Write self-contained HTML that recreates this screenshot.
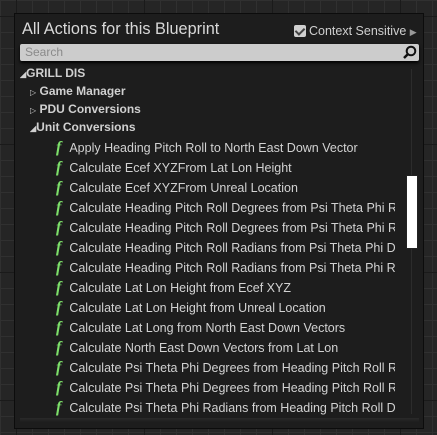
<!DOCTYPE html><html><head><style>
body{margin:0;width:437px;height:435px;overflow:hidden;background-color:#252525;
background-image:linear-gradient(#1a1a1a 1px,transparent 1px),linear-gradient(90deg,#1a1a1a 1px,transparent 1px),linear-gradient(#303030 1px,transparent 1px),linear-gradient(90deg,#303030 1px,transparent 1px);
background-size:128px 128px,128px 128px,16px 16px,16px 16px;background-position:16px 16px,16px 16px,0 0,0 0;
font-family:"Liberation Sans",sans-serif;position:relative}
.p{position:absolute;left:14px;top:13px;width:408px;height:414px;background:#1d1d1d;border:1px solid #0c0c0c}
.t{position:absolute;left:7px;top:6px;color:#d8d8d8;font-size:16.3px}
.cs{position:absolute;left:279px;top:10px;color:#cfcfcf;font-size:12.5px}
.cb{display:inline-block;width:12px;height:12px;background:#d0d0d0;border-radius:2px;vertical-align:-2px;margin-right:3px;position:relative}
.cb:after{content:"";position:absolute;left:3px;top:1px;width:4px;height:7px;border:solid #444;border-width:0 2px 2px 0;transform:rotate(45deg)}
.s{position:absolute;left:5px;top:30px;width:399px;height:17px;background:#cccccc;border-radius:2px;color:#8a8a8a;font-size:12px;line-height:17px;text-indent:5px;box-shadow:0 2px 3px #000}
.r{position:absolute;white-space:nowrap;color:#d2d2d2;font-size:12.5px;overflow:hidden}
.c{font-weight:bold;color:#d0d0d0;font-size:12px}
.f{color:#7ddf6a;font-family:"Liberation Serif",serif;font-style:italic;font-weight:bold;font-size:16px;margin-right:8px}
.tr{position:absolute;left:396px;top:55px;width:1px;height:345px;background:#2c2c2c}
.th{position:absolute;left:391px;top:161px;width:10px;height:72px;background:#fff;border:1px solid #222}
.bot{position:absolute;left:5px;top:404px;width:399px;height:4px;background:linear-gradient(#2a2a2a,#1d1d1d)}
</style></head><body><div class="p">
<div class="t">All Actions for this Blueprint</div>
<div class="cs"><span class="cb"></span>Context Sensitive <span style="color:#999;font-size:9px">&#9654;</span></div>
<div class="s">Search<svg style="position:absolute;right:2px;top:1px" width="15" height="15" viewBox="0 0 15 15"><circle cx="9" cy="6" r="4.3" fill="none" stroke="#111" stroke-width="2"/><line x1="6" y1="9" x2="2" y2="13" stroke="#111" stroke-width="2.5"/></svg></div>
<div class="tr"></div><div class="th"></div>
<div class="r c" style="left:5px;top:52px"><span style="font-size:8px">&#9698;</span>GRILL DIS</div>
<div class="r c" style="left:15px;top:70px"><span style="font-size:8px;font-weight:normal">&#9655;</span> Game Manager</div>
<div class="r c" style="left:15px;top:88px"><span style="font-size:8px;font-weight:normal">&#9655;</span> PDU Conversions</div>
<div class="r c" style="left:15px;top:106px"><span style="font-size:8px">&#9698;</span>Unit Conversions</div>
<div style="position:absolute;left:41px;top:125px;width:339px;height:279px;overflow:hidden">
<div class="r" style="top:0"><span class="f">f</span>Apply Heading Pitch Roll to North East Down Vector</div>
<div class="r" style="top:20px"><span class="f">f</span>Calculate Ecef XYZFrom Lat Lon Height</div>
<div class="r" style="top:40px"><span class="f">f</span>Calculate Ecef XYZFrom Unreal Location</div>
<div class="r" style="top:60px"><span class="f">f</span>Calculate Heading Pitch Roll Degrees from Psi Theta Phi Radians</div>
<div class="r" style="top:80px"><span class="f">f</span>Calculate Heading Pitch Roll Degrees from Psi Theta Phi Radians</div>
<div class="r" style="top:100px"><span class="f">f</span>Calculate Heading Pitch Roll Radians from Psi Theta Phi Degrees</div>
<div class="r" style="top:120px"><span class="f">f</span>Calculate Heading Pitch Roll Radians from Psi Theta Phi Radians</div>
<div class="r" style="top:140px"><span class="f">f</span>Calculate Lat Lon Height from Ecef XYZ</div>
<div class="r" style="top:160px"><span class="f">f</span>Calculate Lat Lon Height from Unreal Location</div>
<div class="r" style="top:180px"><span class="f">f</span>Calculate Lat Long from North East Down Vectors</div>
<div class="r" style="top:200px"><span class="f">f</span>Calculate North East Down Vectors from Lat Lon</div>
<div class="r" style="top:220px"><span class="f">f</span>Calculate Psi Theta Phi Degrees from Heading Pitch Roll Radians</div>
<div class="r" style="top:240px"><span class="f">f</span>Calculate Psi Theta Phi Degrees from Heading Pitch Roll Radians</div>
<div class="r" style="top:260px"><span class="f">f</span>Calculate Psi Theta Phi Radians from Heading Pitch Roll Degrees</div>
</div>
<div class="bot"></div>
</div></body></html>
